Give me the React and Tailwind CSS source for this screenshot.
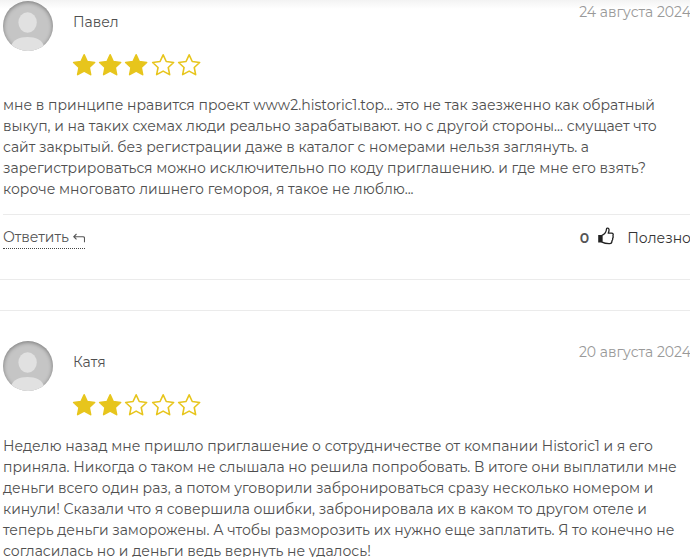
import React from 'react';

const REVIEWS = [
  {
    id: 1,
    name: 'Павел',
    date: '24 августа 2024',
    rating: 3,
    votes: 0,
    text: 'мне в принципе нравится проект www2.historic1.top... это не так заезженно как обратный выкуп, и на таких схемах люди реально зарабатывают. но с другой стороны... смущает что сайт закрытый. без регистрации даже в каталог с номерами нельзя заглянуть. а зарегистрироваться можно исключительно по коду приглашению. и где мне его взять? короче многовато лишнего гемороя, я такое не люблю...',
  },
  {
    id: 2,
    name: 'Катя',
    date: '20 августа 2024',
    rating: 2,
    text: 'Неделю назад мне пришло приглашение о сотрудничестве от компании Historic1 и я его приняла. Никогда о таком не слышала но решила попробовать. В итоге они выплатили мне деньги всего один раз, а потом уговорили забронироваться сразу несколько номером и кинули! Сказали что я совершила ошибки, забронировала их в каком то другом отеле и теперь деньги заморожены. А чтобы разморозить их нужно еще заплатить. Я то конечно не согласилась но и деньги ведь вернуть не удалось!',
  },
];

const Avatar = () => (
  <div className="h-[50px] w-[50px] shrink-0 overflow-hidden rounded-full bg-[#c5c5c5] shadow-[inset_0_1px_4px_rgba(0,0,0,0.4)]">
    <svg viewBox="0 0 50 50" className="h-full w-full" fill="#e1e1e1">
      <ellipse cx="24.6" cy="21.5" rx="9.2" ry="10.3" />
      <path d="M8 50v-5c2-6 8-9 16.500-9s14.500 3 16.500 9v5z" />
    </svg>
  </div>
);

const Star = ({ filled }) => (
  <svg
    viewBox="0 0 22.300 21.400"
    className="h-[21.4px] w-[22.3px] overflow-visible"
    fill={filled ? '#e7c51c' : 'none'}
    stroke="#e7c51c"
    strokeWidth="1.600"
    strokeLinejoin="round"
  >
    <path d="M11.150 0.800l3.100 6.700 7.400 1-5.400 5 1.400 7.100-6.500-3.500-6.500 3.500 1.400-7.100-5.400-5 7.400-1z" />
  </svg>
);

const ReplyIcon = () => (
  <svg viewBox="0 0 12 10" className="h-[10px] w-3" fill="none" stroke="#555" strokeWidth="1.100">
    <path d="M3.500 1L0.800 3.700l2.700 2.700M0.800 3.700h9.200q1.500 0 1.500 1.500v4" />
  </svg>
);

const ThumbIcon = () => (
  <svg viewBox="0 0 16 18" className="h-[18px] w-4" fill="none" stroke="#222" strokeWidth="1.300" strokeLinejoin="round">
    <path d="M0.200 8h3.800v7.500H0.200z" fill="#222" stroke="none" />
    <path d="M4 8.300c2.500-1.100 4.300-3.300 4.500-6.300.1-1.300 2.300-1.300 2.500.5.200 1.500-.3 2.700-.8 3.700h3.400c1.700 0 1.900 1.500 1.300 2.600.5 1 .2 1.900-.3 2.500.3 1-.1 1.900-.6 2.400 0 1.700-.6 2.900-2.300 2.900-3 .1-5-.1-7.700-1.500z" />
  </svg>
);

const ReviewHeader = ({ review }) => (
  <div className="flex items-start">
    <Avatar />
    <div className="ml-5 flex-1">
      <div className="mt-[11px] text-sm leading-[21px] text-[#4f4f4f]">{review.name}</div>
      <div className="mt-[21px] -ml-[0.3px] flex h-[22px] gap-1">
        {[1, 2, 3, 4, 5].map((value) => (
          <Star key={value} filled={value <= review.rating} />
        ))}
      </div>
    </div>
    <time className="-mr-px mt-px text-sm leading-[21px] text-[#999]">{review.date}</time>
  </div>
);

const ReviewFooter = ({ votes }) => (
  <div className="mt-[14px] flex h-[65px] items-start justify-between border-t border-[#ebebeb] pt-3">
    <button className="flex h-[22px] items-start gap-1 border-b border-dotted border-[#444] text-sm leading-[21px] text-[#555]">
      <span>Ответить</span>
      <span className="pt-[6px]">
        <ReplyIcon />
      </span>
    </button>
    <div className="-mr-px flex items-start text-sm leading-[23px] text-[#333]">
      <span className="font-semibold text-[#555]">{votes}</span>
      <span className="ml-[9px]">
        <ThumbIcon />
      </span>
      <span className="ml-[13px]">Полезно</span>
    </div>
  </div>
);

const Review = ({ review, bodyGap }) => (
  <article className="border-b border-[#ebebeb] pl-[3px]">
    <ReviewHeader review={review} />
    <p className={`${bodyGap} text-sm leading-[21px] text-[#4f4f4f]`}>{review.text}</p>
    {review.votes !== undefined && <ReviewFooter votes={review.votes} />}
  </article>
);

export default function App() {
  return (
    <main className="h-[557px] w-[690px] overflow-hidden bg-white bg-linear-to-b from-[#f3f3f3] to-white to-[9px] pt-px font-['Montserrat','Inter',sans-serif]">
      <Review review={REVIEWS[0]} bodyGap="mt-[19px]" />
      <div className="mt-[30px] border-t border-[#ebebeb] pt-[30px]">
        <Review review={REVIEWS[1]} bodyGap="mt-5" />
      </div>
    </main>
  );
}
